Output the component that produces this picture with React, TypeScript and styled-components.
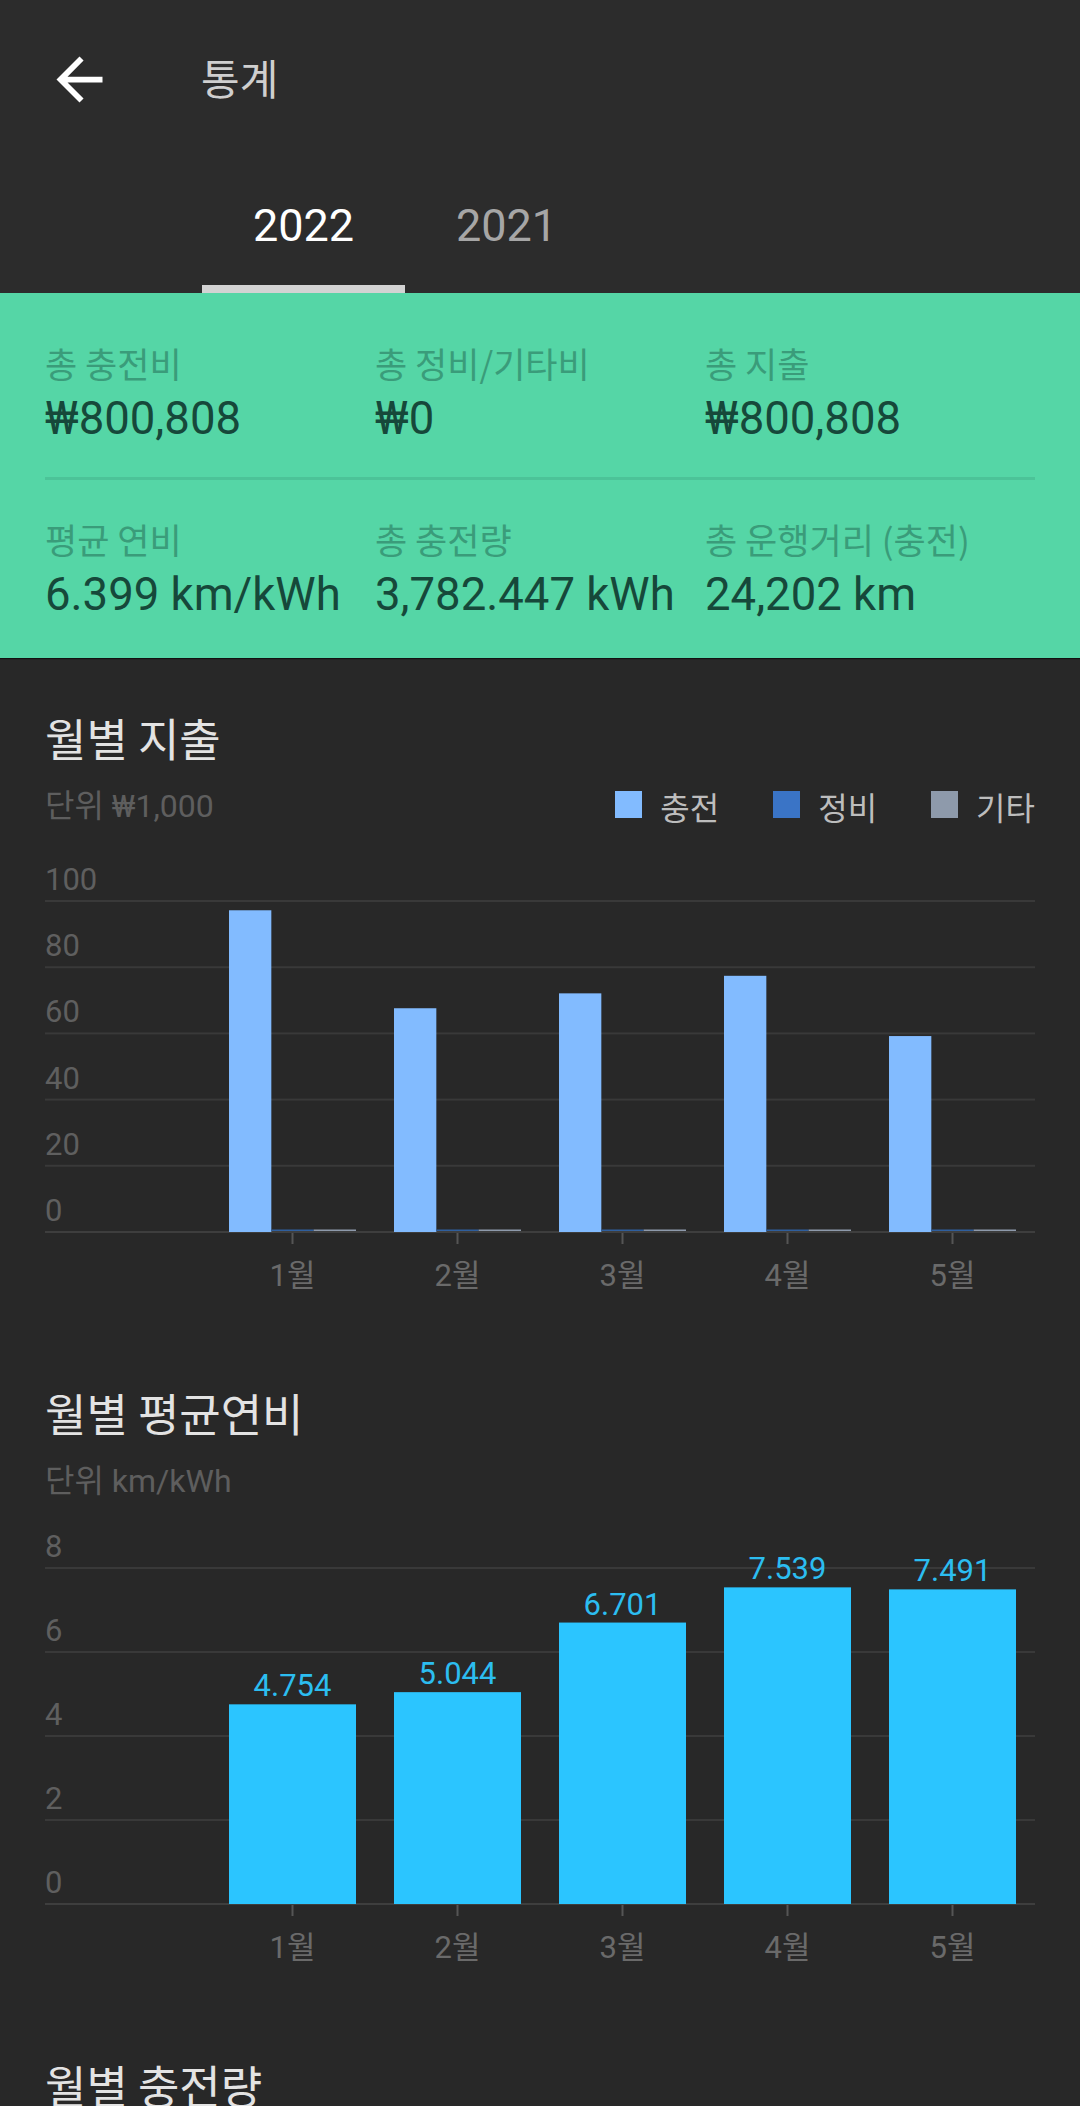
import React from "react";
import styled, { createGlobalStyle, css } from "styled-components";

const KR = `"Noto Sans CJK KR", Roboto, sans-serif`;
const NUM = `Roboto, "Noto Sans CJK KR", sans-serif`;

const Global = createGlobalStyle`
  html, body { margin: 0; padding: 0; background: #282828; }
  body { font-family: ${NUM}; -webkit-font-smoothing: antialiased; }
  * { box-sizing: border-box; }
`;

const Page = styled.div`
  width: 1080px;
  height: 2106px;
  background: #282828;
  display: flex;
  flex-direction: column;
  overflow: hidden;
`;

const Header = styled.header`
  background: #2c2c2c;
  display: flex;
  flex-direction: column;
  flex-shrink: 0;
`;

const Toolbar = styled.div`
  height: 158px;
  display: flex;
  align-items: center;
  padding-left: 45px;
`;

const BackButton = styled.button`
  width: 69px;
  height: 69px;
  border: 0;
  padding: 0;
  background: none;
  display: flex;
  margin-right: 87px;
  color: #ffffff;
`;

const Title = styled.h1`
  margin: 0;
  font: 400 42px/1 ${KR};
  color: #cfcfcf;
  padding-bottom: 4px;
`;

const TabBar = styled.div`
  height: 135px;
  display: flex;
  padding-left: 202px;
`;

const Tab = styled.div<{ $active?: boolean }>`
  width: 203px;
  position: relative;
  display: flex;
  align-items: center;
  justify-content: center;
  font: 400 45px/1 ${NUM};
  color: ${(p) => (p.$active ? "#ffffff" : "#a6a6a6")};
  ${(p) =>
    p.$active &&
    css`
      &::after {
        content: "";
        position: absolute;
        left: 0;
        right: 0;
        bottom: 0;
        height: 8px;
        background: #d3d3d3;
      }
    `}
`;

const Stats = styled.section`
  background: #55d6a6;
  padding: 51px 45px 35px;
  box-shadow: 0 1px 1px rgba(0, 0, 0, 0.55);
  position: relative;
  z-index: 1;
  flex-shrink: 0;
`;

const StatRow = styled.div`
  display: grid;
  grid-template-columns: repeat(3, 330px);
`;

const Stat = styled.div`
  display: flex;
  flex-direction: column;
  gap: 7px;
`;

const StatLabel = styled.div`
  height: 40px;
  display: flex;
  align-items: center;
  padding-bottom: 4px;
  font: 400 35px/1 ${KR};
  color: #3a9c7a;
  white-space: nowrap;
`;

const StatValue = styled.div`
  height: 56px;
  display: flex;
  align-items: center;
  font: 400 45.5px/1 ${NUM};
  color: #16483a;
  white-space: nowrap;
`;

const Divider = styled.hr`
  margin: 30px 0 40px;
  border: 0;
  height: 3px;
  background: #4cc398;
`;

const Section = styled.section<{ $mt: number }>`
  padding: 0 45px;
  margin-top: ${(p) => p.$mt}px;
  display: flex;
  flex-direction: column;
  flex-shrink: 0;
`;

const SectionTitle = styled.h2`
  margin: 0;
  height: 56px;
  display: flex;
  align-items: center;
  padding-bottom: 4px;
  font: 400 45px/1 ${KR};
  color: #e3e3e3;
  white-space: nowrap;
`;

const SubRow = styled.div`
  margin-top: 19px;
  height: 40px;
  display: flex;
  align-items: center;
  justify-content: space-between;
`;

const Unit = styled.div`
  font: 400 32px/1 ${NUM};
  color: #5e5e5e;
`;

const Legend = styled.div`
  display: flex;
  align-items: center;
  gap: 54px;
`;

const LegendItem = styled.div`
  display: flex;
  align-items: center;
  gap: 18px;
  font: 400 32px/1 ${KR};
  color: #bdbdbd;
`;

const Swatch = styled.span<{ $color: string }>`
  width: 27px;
  height: 27px;
  background: ${(p) => p.$color};
  margin-top: -4px;
`;

const ChartSvg = styled.svg`
  display: block;
  overflow: visible;
`;

type Series = { color: string; values: number[] };

type ChartProps = {
  gridTop: number;
  plotH: number;
  max: number;
  step: number;
  series: Series[];
  months: string[];
  groupWidth: number;
  valueColor?: string;
  format?: (v: number) => string;
};

const W = 990;
const SLOT = 165;

function BarChart({ gridTop, plotH, max, step, series, months, groupWidth, valueColor, format }: ChartProps) {
  const baseline = gridTop + plotH;
  const height = baseline + 74;
  const ticks: number[] = [];
  for (let v = 0; v <= max + 1e-9; v += step) ticks.push(v);
  const yOf = (v: number) => baseline - (plotH * v) / max;
  const barW = groupWidth / series.length;
  return (
    <ChartSvg width={W} height={height} viewBox={`0 0 ${W} ${height}`}>
      {ticks.map((v) => {
        const y = yOf(v);
        return (
          <g key={v}>
            <rect x={0} y={y - 1} width={W} height={2} fill={v === 0 ? "#3e3e3e" : "#393939"} />
            <text x={0} y={y - 11} fontSize={31} fill="#5f5f5f" fontFamily="Roboto, sans-serif">
              {v}
            </text>
          </g>
        );
      })}
      {months.map((m, i) => {
        const cx = SLOT * (i + 1) + SLOT / 2;
        const left = cx - groupWidth / 2;
        return (
          <g key={m}>
            {series.map((s, si) => {
              const v = s.values[i];
              const top = v > 0 ? yOf(v) : baseline - 2.5;
              return (
                <rect
                  key={si}
                  x={left + si * barW}
                  y={top}
                  width={barW}
                  height={baseline - top - (v > 0 ? 0 : 1)}
                  fill={s.color}
                />
              );
            })}
            {format &&
              series.map((s, si) => (
                <text
                  key={`v${si}`}
                  x={left + si * barW + barW / 2}
                  y={yOf(s.values[i]) - 8}
                  fontSize={31}
                  textAnchor="middle"
                  fill={valueColor}
                  fontFamily="Roboto, sans-serif"
                >
                  {format(s.values[i])}
                </text>
              ))}
            <rect x={cx - 1} y={baseline + 1} width={2} height={11} fill="#555555" />
            <text
              x={cx}
              y={baseline + 54}
              fontSize={31}
              textAnchor="middle"
              fill="#6a6a6a"
              fontFamily={`Roboto, "Noto Sans CJK KR", sans-serif`}
            >
              {m}
            </text>
          </g>
        );
      })}
    </ChartSvg>
  );
}

const ArrowBack = () => (
  <svg width="69" height="69" viewBox="0 0 24 24" fill="currentColor">
    <path d="M20 11H7.83l5.59-5.59L12 4l-8 8 8 8 1.41-1.41L7.83 13H20v-2z" />
  </svg>
);

const months = ["1월", "2월", "3월", "4월", "5월"];

const statsTop = [
  { label: "총 충전비", value: "₩800,808" },
  { label: "총 정비/기타비", value: "₩0" },
  { label: "총 지출", value: "₩800,808" },
];
const statsBottom = [
  { label: "평균 연비", value: "6.399 km/kWh" },
  { label: "총 충전량", value: "3,782.447 kWh" },
  { label: "총 운행거리 (충전)", value: "24,202 km" },
];

const legend = [
  { name: "충전", color: "#82bbff" },
  { name: "정비", color: "#3a74c6" },
  { name: "기타", color: "#8e9aab" },
];

export default function App() {
  return (
    <Page>
      <Global />
      <Header>
        <Toolbar>
          <BackButton aria-label="back">
            <ArrowBack />
          </BackButton>
          <Title>통계</Title>
        </Toolbar>
        <TabBar>
          <Tab $active>2022</Tab>
          <Tab>2021</Tab>
        </TabBar>
      </Header>

      <Stats>
        <StatRow>
          {statsTop.map((s) => (
            <Stat key={s.label}>
              <StatLabel>{s.label}</StatLabel>
              <StatValue>{s.value}</StatValue>
            </Stat>
          ))}
        </StatRow>
        <Divider />
        <StatRow>
          {statsBottom.map((s) => (
            <Stat key={s.label}>
              <StatLabel>{s.label}</StatLabel>
              <StatValue>{s.value}</StatValue>
            </Stat>
          ))}
        </StatRow>
      </Stats>

      <Section $mt={53}>
        <SectionTitle>월별 지출</SectionTitle>
        <SubRow>
          <Unit>단위 ₩1,000</Unit>
          <Legend>
            {legend.map((l) => (
              <LegendItem key={l.name}>
                <Swatch $color={l.color} />
                {l.name}
              </LegendItem>
            ))}
          </Legend>
        </SubRow>
        <BarChart
          gridTop={75}
          plotH={331}
          max={100}
          step={20}
          months={months}
          groupWidth={127}
          series={[
            { color: "#82bbff", values: [97.2, 67.6, 72.1, 77.4, 59.2] },
            { color: "#2f5f9e", values: [0, 0, 0, 0, 0] },
            { color: "#8e9aab", values: [0, 0, 0, 0, 0] },
          ]}
        />
      </Section>

      <Section $mt={80}>
        <SectionTitle>월별 평균연비</SectionTitle>
        <SubRow>
          <Unit>단위 km/kWh</Unit>
        </SubRow>
        <BarChart
          gridTop={67}
          plotH={336}
          max={8}
          step={2}
          months={months}
          groupWidth={127}
          valueColor="#2cbdf0"
          format={(v) => v.toFixed(3)}
          series={[{ color: "#2bc5ff", values: [4.754, 5.044, 6.701, 7.539, 7.491] }]}
        />
      </Section>

      <Section $mt={80}>
        <SectionTitle>월별 충전량</SectionTitle>
      </Section>
    </Page>
  );
}
